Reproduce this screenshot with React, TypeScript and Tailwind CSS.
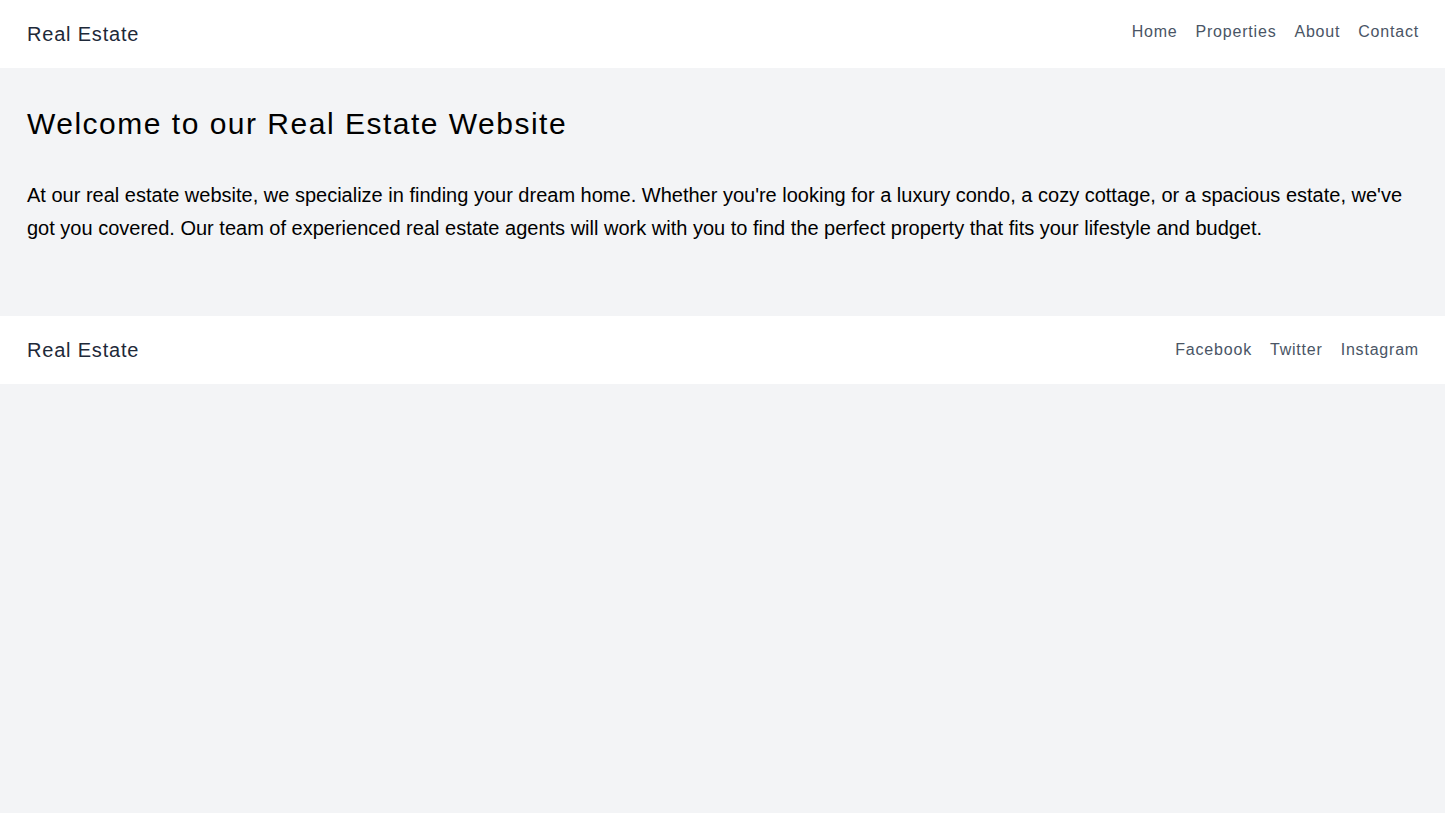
const navLinks = ["Home", "Properties", "About", "Contact"];
const socialLinks = ["Facebook", "Twitter", "Instagram"];

function Bar({ links, centered }: { links: string[]; centered?: boolean }) {
  return (
    <div className={`flex justify-between bg-white py-5 pl-[27px] pr-[26px] ${centered ? "items-center" : ""}`}>
      <a href="#" className="text-xl text-gray-800">
        Real Estate
      </a>
      <nav className="flex gap-[18px]">
        {links.map((link) => (
          <a key={link} href="#" className="text-base text-gray-600 hover:text-gray-900">
            {link}
          </a>
        ))}
      </nav>
    </div>
  );
}

export default function App() {
  return (
    <div className="min-h-screen bg-gray-100 font-['Liberation_Sans',Arial,sans-serif] tracking-wider">
      <header>
        <Bar links={navLinks} />
      </header>

      <main className="h-[248px] pl-[27px] pr-[26px] pt-[38px]">
        <h1 className="mb-[37px] text-3xl tracking-wider text-black">Welcome to our Real Estate Website</h1>
        <p className="text-xl leading-relaxed tracking-normal text-black">
          At our real estate website, we specialize in finding your dream home. Whether you're looking for a
          luxury condo, a cozy cottage, or a spacious estate, we've got you covered. Our team of experienced
          real estate agents will work with you to find the perfect property that fits your lifestyle and
          budget.
        </p>
      </main>

      <footer>
        <Bar links={socialLinks} centered />
      </footer>
    </div>
  );
}
